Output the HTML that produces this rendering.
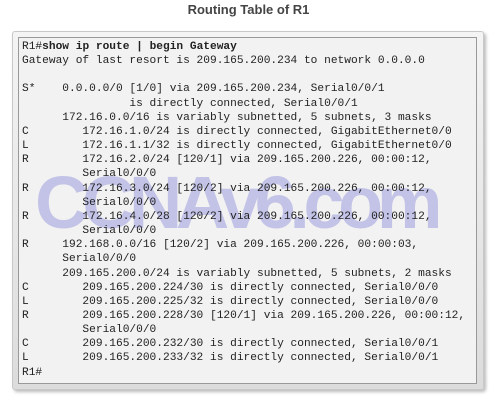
<!DOCTYPE html>
<html><head><style>
body{margin:0;width:497px;height:400px;background:#fff;position:relative;overflow:hidden}
.t{position:absolute;top:2px;left:0;width:497px;text-align:center;font:bold 13px "Liberation Sans",sans-serif;color:#444}
.o{position:absolute;left:12px;top:31px;width:470px;height:357px;background:linear-gradient(#f4f4f4,#dcdcdc);border:1px solid #c8c8c8;border-radius:3px;box-shadow:2px 2px 3px #bbb}
.i{position:absolute;left:18px;top:37px;width:457px;height:345px;background:#f2f2f2;border:1px solid #999}
.w{position:absolute;left:35px;top:160px;font:bold 74px "Liberation Sans",sans-serif;color:#c3c3e8;letter-spacing:-6.5px;white-space:nowrap}
pre{position:absolute;left:22px;top:40px;margin:0;font-family:"Liberation Mono",monospace;font-size:11.2px;line-height:14.15px;color:#222}
</style></head><body>
<div class="t">Routing Table of R1</div>
<div class="o"></div><div class="i"></div>
<div class="w">CCNAv6.com</div>
<pre>R1#<b>show ip route | begin Gateway</b>
Gateway of last resort is 209.165.200.234 to network 0.0.0.0

S*    0.0.0.0/0 [1/0] via 209.165.200.234, Serial0/0/1
                is directly connected, Serial0/0/1
      172.16.0.0/16 is variably subnetted, 5 subnets, 3 masks
C        172.16.1.0/24 is directly connected, GigabitEthernet0/0
L        172.16.1.1/32 is directly connected, GigabitEthernet0/0
R        172.16.2.0/24 [120/1] via 209.165.200.226, 00:00:12,
         Serial0/0/0
R        172.16.3.0/24 [120/2] via 209.165.200.226, 00:00:12,
         Serial0/0/0
R        172.16.4.0/28 [120/2] via 209.165.200.226, 00:00:12,
         Serial0/0/0
R     192.168.0.0/16 [120/2] via 209.165.200.226, 00:00:03,
      Serial0/0/0
      209.165.200.0/24 is variably subnetted, 5 subnets, 2 masks
C        209.165.200.224/30 is directly connected, Serial0/0/0
L        209.165.200.225/32 is directly connected, Serial0/0/0
R        209.165.200.228/30 [120/1] via 209.165.200.226, 00:00:12,
         Serial0/0/0
C        209.165.200.232/30 is directly connected, Serial0/0/1
L        209.165.200.233/32 is directly connected, Serial0/0/1
R1#</pre>
</body></html>
